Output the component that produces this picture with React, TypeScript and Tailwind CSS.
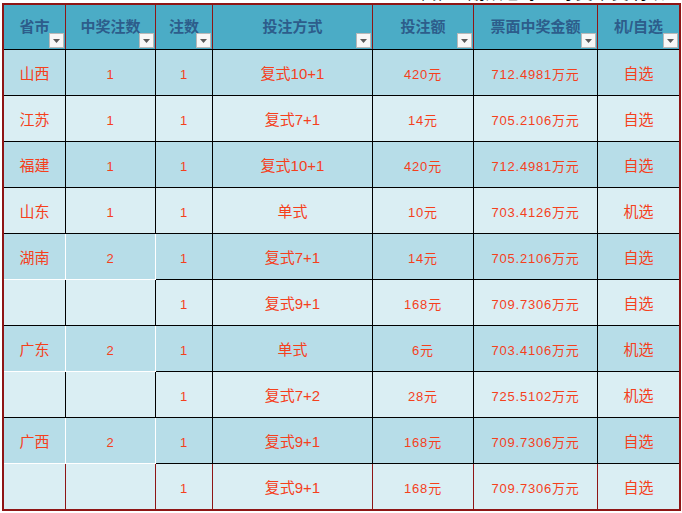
import React from 'react';

type Row = {
  province: string;
  wins: string;
  bets: string;
  mode: string;
  amount: string;
  prize: string;
  pick: string;
  merged?: boolean;
};

const rows: Row[] = [
  { province: '山西', wins: '1', bets: '1', mode: '复式10+1', amount: '420元', prize: '712.4981万元', pick: '自选' },
  { province: '江苏', wins: '1', bets: '1', mode: '复式7+1', amount: '14元', prize: '705.2106万元', pick: '自选' },
  { province: '福建', wins: '1', bets: '1', mode: '复式10+1', amount: '420元', prize: '712.4981万元', pick: '自选' },
  { province: '山东', wins: '1', bets: '1', mode: '单式', amount: '10元', prize: '703.4126万元', pick: '机选' },
  { province: '湖南', wins: '2', bets: '1', mode: '复式7+1', amount: '14元', prize: '705.2106万元', pick: '自选' },
  { province: '', wins: '', bets: '1', mode: '复式9+1', amount: '168元', prize: '709.7306万元', pick: '自选', merged: true },
  { province: '广东', wins: '2', bets: '1', mode: '单式', amount: '6元', prize: '703.4106万元', pick: '机选' },
  { province: '', wins: '', bets: '1', mode: '复式7+2', amount: '28元', prize: '725.5102万元', pick: '机选', merged: true },
  { province: '广西', wins: '2', bets: '1', mode: '复式9+1', amount: '168元', prize: '709.7306万元', pick: '自选' },
  { province: '', wins: '', bets: '1', mode: '复式9+1', amount: '168元', prize: '709.7306万元', pick: '自选', merged: true },
];

const headers = ['省市', '中奖注数', '注数', '投注方式', '投注额', '票面中奖金额', '机/自选'];
const widths = ['w-[62px]', 'w-[90px]', 'w-[57px]', 'w-[160px]', 'w-[101px]', 'w-[124px]', 'w-[81px]'];

const FilterButton = () => (
  <div className="absolute right-[1px] bottom-[1px] w-[15px] h-[15px] bg-[#f7f7f7] border border-[#b9b9b9] flex items-center justify-center">
    <svg width="7" height="4" viewBox="0 0 7 4">
      <path d="M0 0h7L3.5 4z" fill="#5a5a5a" />
    </svg>
  </div>
);

const App = () => {
  return (
    <div
      className="w-[682px] h-[513px] bg-white overflow-hidden"
      style={{ fontFamily: '"Liberation Sans", "Noto Sans CJK SC", sans-serif' }}
    >
      {/* cut-off title above the sheet */}
      <div className="h-[3px] overflow-hidden pl-[372px]">
        <div className="-mt-[16px] text-[17px] leading-[19px] text-black tracking-[1px]">
          2013年第一期双色球一等奖中奖明细表
        </div>
      </div>

      <div className="ml-[2px] w-[679px] border-2 border-[#8e1515]">
        {/* header */}
        <div className="flex h-[45px] bg-[#4bacc6] border-b border-black">
          {headers.map((h, i) => (
            <div
              key={h}
              className={`${widths[i]} relative flex items-center justify-center text-[15px] font-bold text-[#2d5d8b] ${
                i < headers.length - 1 ? 'border-r border-[#8e1515]' : ''
              }`}
            >
              <span className="mt-[1px]">{h}</span>
              <FilterButton />
            </div>
          ))}
        </div>

        {/* body */}
        {rows.map((r, idx) => {
          const bg = idx % 2 === 0 ? 'bg-[#b7dde8]' : 'bg-[#daeef3]';
          const last = idx === rows.length - 1;
          const next = rows[idx + 1];
          const innerLine = next && next.merged ? 'border-b border-white' : last ? '' : 'border-b border-black';
          const line = last ? '' : 'border-b border-black';
          const cells = [r.province, r.wins, r.bets, r.mode, r.amount, r.prize, r.pick];
          return (
            <div key={idx} className={`flex h-[46px] last:h-[45px] ${bg} text-[#f5401c]`}>
              {cells.map((c, i) => {
                const big = i === 0 || i === 3 || i === 6;
                return (
                  <div
                    key={i}
                    className={`${widths[i]} flex items-center justify-center pt-[4px] ${i < 2 ? innerLine : line} ${
                      i < cells.length - 1 ? 'border-r border-[#8e1515]' : ''
                    } ${big ? 'text-[15px]' : 'text-[13px] tracking-[0.8px]'}`}
                  >
                    {c}
                  </div>
                );
              })}
            </div>
          );
        })}
      </div>
    </div>
  );
};

export default App;
